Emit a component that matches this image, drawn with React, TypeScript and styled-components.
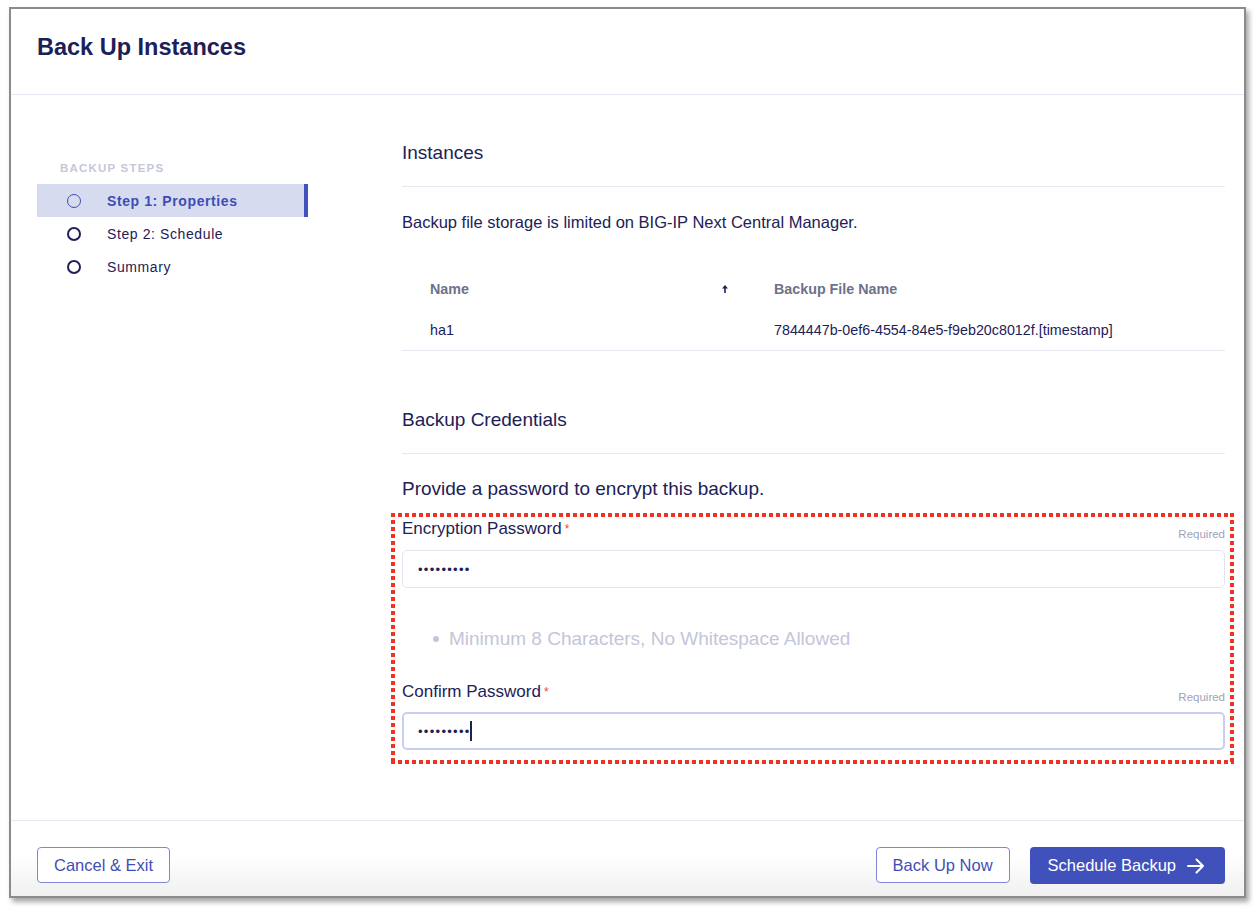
import * as React from 'react';
import styled, { createGlobalStyle } from 'styled-components';

// *** Global ***
const GlobalStyle = createGlobalStyle`
    html, body {
        margin: 0;
        padding: 0;
        background: #ffffff;
    }
    body {
        font-family: "Liberation Sans", Arial, sans-serif;
        color: #1d2156;
    }
    * {
        box-sizing: border-box;
    }
`

// *** Styled Components ***
const Page = styled.div`
    width: 1254px;
    height: 912px;
    padding: 7px 0 0 9px;
    background: #ffffff;
`
const Window = styled.div`
    width: 1237px;
    height: 891px;
    border: 2px solid #8b8b8b;
    background: #ffffff;
    box-shadow: 3px 4px 5px rgba(0, 0, 0, 0.35);
    display: flex;
    flex-direction: column;
`
const Header = styled.header`
    flex: none;
    height: 86px;
    display: flex;
    align-items: center;
    padding: 0 26px 9px;
    border-bottom: 1px solid #e6e7f2;
`
const Title = styled.h1`
    margin: 0;
    font-size: 23.5px;
    font-weight: 700;
    color: #1b2057;
`
const Body = styled.div`
    flex: 1;
    min-height: 0;
    display: flex;
`
const Sidebar = styled.nav`
    flex: none;
    width: 271px;
    margin-left: 26px;
    padding-top: 65px;
`
const StepsLabel = styled.div`
    padding-left: 23px;
    margin-bottom: 8px;
    font-size: 11.5px;
    line-height: 16px;
    font-weight: 700;
    letter-spacing: 1.2px;
    color: #c5c7d8;
`
const StepRow = styled.div<{ $active?: boolean }>`
    height: 33px;
    display: flex;
    align-items: center;
    gap: 26px;
    padding-left: 30px;
    background: ${p => p.$active ? '#d7dbf0' : 'transparent'};
    border-right: 4px solid ${p => p.$active ? '#4252bd' : 'transparent'};
    font-size: 14px;
    letter-spacing: 0.6px;
    font-weight: ${p => p.$active ? 700 : 400};
    color: ${p => p.$active ? '#3d4db5' : '#1d2156'};
`
const StepCircle = styled.span<{ $active?: boolean }>`
    flex: none;
    width: 14px;
    height: 14px;
    border-radius: 50%;
    border: ${p => p.$active ? '1.5px solid #3d4db5' : '2px solid #1d2156'};
`
const Content = styled.main`
    flex: 1;
    margin-left: 94px;
    padding: 46px 19px 0 0;
`
const SectionTitle = styled.h2<{ $spaced?: boolean }>`
    margin: ${p => p.$spaced ? '57px' : '0'} 0 0;
    padding-bottom: 21px;
    border-bottom: 1px solid #e6e8f2;
    font-size: 19px;
    line-height: 24px;
    font-weight: 400;
`
const Note = styled.p`
    margin: 24px 0 0;
    font-size: 16.5px;
    line-height: 22px;
`
const Table = styled.div`
    margin-top: 36px;
`
const Row = styled.div<{ $head?: boolean }>`
    display: grid;
    grid-template-columns: 344px 1fr;
    align-items: center;
    height: ${p => p.$head ? '40px' : '42px'};
    border-bottom: ${p => p.$head ? 'none' : '1px solid #e6e8f2'};
    font-size: 14.3px;
    font-weight: ${p => p.$head ? 700 : 400};
    color: ${p => p.$head ? '#6d7189' : '#1d2156'};
`
const Cell = styled.div`
    display: flex;
    align-items: center;
    justify-content: space-between;
    padding: 0 18px 0 28px;
`
const Prompt = styled.p`
    margin: 23px 0 0;
    font-size: 19px;
    line-height: 24px;
`
const FieldGroup = styled.div`
    position: relative;
    margin-top: 18px;
`
const Annotation = styled.div`
    position: absolute;
    top: -6px;
    left: -11px;
    right: -9px;
    bottom: -14px;
    pointer-events: none;
    background:
        repeating-linear-gradient(90deg, #ee3325 0 4px, transparent 4px 7px) top left / 100% 4px no-repeat,
        repeating-linear-gradient(90deg, #ee3325 0 4px, transparent 4px 7px) bottom left / 100% 4px no-repeat,
        repeating-linear-gradient(180deg, #ee3325 0 4px, transparent 4px 7px) top left / 4px 100% no-repeat,
        repeating-linear-gradient(180deg, #ee3325 0 4px, transparent 4px 7px) top right / 4px 100% no-repeat;
`
const FieldHead = styled.div<{ $spaced?: boolean }>`
    display: flex;
    justify-content: space-between;
    align-items: flex-end;
    height: 20px;
    margin-top: ${p => p.$spaced ? '31px' : '0'};
`
const Label = styled.label`
    font-size: 17px;
    line-height: 20px;
`
const Asterisk = styled.span`
    margin-left: 3px;
    font-size: 12px;
    vertical-align: top;
    color: #e9473b;
`
const RequiredNote = styled.span`
    margin-bottom: -2px;
    font-size: 11.5px;
    line-height: 14px;
    color: #a0a3b7;
`
const PasswordBox = styled.div<{ $focused?: boolean }>`
    display: flex;
    align-items: center;
    height: 38px;
    margin-top: ${p => p.$focused ? '10px' : '11px'};
    padding-left: ${p => p.$focused ? '14px' : '15px'};
    border: ${p => p.$focused ? '2px solid #c9cef0' : '1px solid #e3e5ee'};
    border-radius: 5px;
    font-size: 13px;
    letter-spacing: 1.3px;
    color: #1d2156;
`
const Caret = styled.span`
    width: 2px;
    height: 20px;
    margin-left: -1px;
    background: #1d2156;
`
const HintList = styled.ul`
    margin: 39px 0 0;
    padding: 0 0 0 31px;
    list-style: none;
`
const HintItem = styled.li`
    display: flex;
    align-items: center;
    gap: 10px;
    font-size: 19px;
    line-height: 24px;
    color: #c3c6da;
    &::before {
        content: '';
        width: 6px;
        height: 6px;
        border-radius: 50%;
        background: #c3c6da;
    }
`
const Footer = styled.footer`
    flex: none;
    height: 76px;
    display: flex;
    align-items: flex-start;
    padding: 26px 19px 0 26px;
    border-top: 1px solid #e6e7f2;
    background: linear-gradient(to bottom, #ffffff 45%, #f0f0f0 100%);
`
const Button = styled.button<{ $primary?: boolean, $push?: boolean }>`
    display: flex;
    align-items: center;
    gap: 11px;
    height: ${p => p.$primary ? '37px' : '36px'};
    margin-left: ${p => p.$push ? 'auto' : p.$primary ? '20px' : '0'};
    padding: ${p => p.$primary ? '0 20px 0 18px' : '0 16px'};
    border: ${p => p.$primary ? 'none' : '1px solid #7d87d5'};
    border-radius: 4px;
    background: ${p => p.$primary ? '#4151bc' : '#ffffff'};
    color: ${p => p.$primary ? '#ffffff' : '#3f4eb6'};
    font-family: inherit;
    font-size: 16.5px;
    cursor: pointer;
`

const SortArrow = () => (
    <svg width="6" height="8" viewBox="0 0 6 8">
        <path d="M3 0 L6 3.4 H3.8 V8 H2.2 V3.4 H0 Z" fill="#1d2156" />
    </svg>
)

const ArrowIcon = () => (
    <svg width="18" height="16" viewBox="0 0 18 16" fill="none">
        <path d="M1 8 H16 M9.5 1.5 L16 8 L9.5 14.5" stroke="#ffffff" strokeWidth="2" strokeLinecap="round" strokeLinejoin="round" />
    </svg>
)

const steps = [
    { label: 'Step 1: Properties', active: true },
    { label: 'Step 2: Schedule', active: false },
    { label: 'Summary', active: false },
]

const App: React.FC = () => {
    return (
        <Page>
            <GlobalStyle />
            <Window>
                <Header>
                    <Title>Back Up Instances</Title>
                </Header>
                <Body>
                    <Sidebar>
                        <StepsLabel>BACKUP STEPS</StepsLabel>
                        {steps.map(step => (
                            <StepRow key={step.label} $active={step.active}>
                                <StepCircle $active={step.active} />
                                {step.label}
                            </StepRow>
                        ))}
                    </Sidebar>
                    <Content>
                        <SectionTitle>Instances</SectionTitle>
                        <Note>Backup file storage is limited on BIG-IP Next Central Manager.</Note>
                        <Table>
                            <Row $head>
                                <Cell>Name <SortArrow /></Cell>
                                <Cell>Backup File Name</Cell>
                            </Row>
                            <Row>
                                <Cell>ha1</Cell>
                                <Cell>7844447b-0ef6-4554-84e5-f9eb20c8012f.[timestamp]</Cell>
                            </Row>
                        </Table>

                        <SectionTitle $spaced>Backup Credentials</SectionTitle>
                        <Prompt>Provide a password to encrypt this backup.</Prompt>
                        <FieldGroup>
                            <FieldHead>
                                <Label>Encryption Password<Asterisk>*</Asterisk></Label>
                                <RequiredNote>Required</RequiredNote>
                            </FieldHead>
                            <PasswordBox>•••••••••</PasswordBox>
                            <HintList>
                                <HintItem>Minimum 8 Characters, No Whitespace Allowed</HintItem>
                            </HintList>
                            <FieldHead $spaced>
                                <Label>Confirm Password<Asterisk>*</Asterisk></Label>
                                <RequiredNote>Required</RequiredNote>
                            </FieldHead>
                            <PasswordBox $focused>•••••••••<Caret /></PasswordBox>
                            <Annotation />
                        </FieldGroup>
                    </Content>
                </Body>
                <Footer>
                    <Button>Cancel &amp; Exit</Button>
                    <Button $push>Back Up Now</Button>
                    <Button $primary>Schedule Backup <ArrowIcon /></Button>
                </Footer>
            </Window>
        </Page>
    )
}

export default App
